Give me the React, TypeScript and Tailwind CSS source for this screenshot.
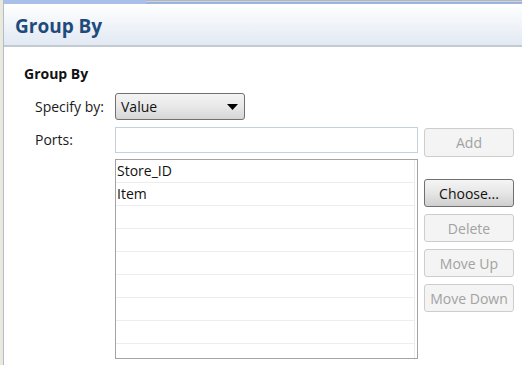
import React from 'react';

const font = { fontFamily: '"Open Sans", "Liberation Sans", sans-serif' };

function Btn({ label, disabled, className = '' }: { label: string; disabled?: boolean; className?: string }) {
  return (
    <button
      disabled={disabled}
      className={
        disabled
          ? `w-[90px] h-[29px] rounded-[3px] border border-[#cdcdcd] bg-[#f4f4f4] text-[14px] text-[#a2a2a2] ${className}`
          : `w-[90px] h-[29px] rounded-[3px] border border-[#707070] bg-gradient-to-b from-[#f5f5f5] via-[#e6e6e6] to-[#cfcfcf] text-[14px] text-[#111] ${className}`
      }
    >
      {label}
    </button>
  );
}

export default function App() {
  const rows = ['Store_ID', 'Item', '', '', '', '', '', '', ''];

  return (
    <div style={font} className="w-[522px] h-[365px] overflow-hidden bg-white flex">
      <div className="w-[3px] bg-[#ece9d8]" />
      <div className="flex-1 flex flex-col border-l border-[#a9bedb]">
        {/* tab edge */}
        <div className="h-[4px] flex">
          <div className="w-[142px] bg-[#a8c0ea]" />
          <div className="flex-1 flex flex-col">
            <div className="h-[1px] bg-[#b4b6bc]" />
            <div className="h-[1px] bg-[#c8d2e4]" />
            <div className="h-[2px] bg-[#9db4dc]" />
          </div>
        </div>

        {/* header */}
        <div className="h-[43px] flex items-center pl-[11px] bg-gradient-to-b from-white to-[#e2e9f3] border-b-2 border-[#c3cbd2]">
          <span className="text-[19px] font-bold text-[#1e4b7b] leading-none mt-[3px]">Group By</span>
        </div>

        {/* body */}
        <div className="pt-[15px] flex flex-col">
          <div className="pl-[20px] h-[24px] leading-[24px] text-[14px] font-bold text-[#111]">Group By</div>

          <div className="mt-[7px] pl-[31px] flex items-center h-[27px]">
            <span className="w-[80px] text-[14px] text-[#1a1a1a]">Specify by:</span>
            <div className="w-[130px] h-[27px] rounded-[3px] border border-[#707070] bg-gradient-to-b from-[#f4f4f4] via-[#e8e8e8] to-[#d6d6d6] flex items-center justify-between pl-[5px] pr-[6px]">
              <span className="text-[14px] text-[#111]">Value</span>
              <svg width="11" height="6" viewBox="0 0 11 6">
                <path d="M0 0 L11 0 L5.5 6 Z" fill="#000" />
              </svg>
            </div>
          </div>

          <div className="mt-[7px] pl-[31px] flex items-start">
            <span className="w-[80px] h-[26px] leading-[26px] text-[14px] text-[#1a1a1a]">Ports:</span>
            <div className="flex flex-col">
              <input className="w-[303px] h-[26px] border border-[#c4d1de] outline-none bg-white" />
              <div className="mt-[6px] w-[303px] h-[200px] border border-[#a3a3a3] overflow-hidden">
                <div className="mr-[2px] border-r border-[#ececec] h-full">
                  {rows.map((r, i) => (
                    <div key={i} className="h-[23px] border-b border-[#ededed] pl-[1px] leading-[22px] text-[14px] text-[#111]">
                      {r}
                    </div>
                  ))}
                </div>
              </div>
            </div>
            <div className="ml-[6px] flex flex-col mt-[1px]">
              <Btn label="Add" disabled />
              <Btn label="Choose..." className="mt-[22px] !h-[28px]" />
              <Btn label="Delete" disabled className="mt-[7px] !h-[28px]" />
              <Btn label="Move Up" disabled className="mt-[7px] !h-[28px]" />
              <Btn label="Move Down" disabled className="mt-[7px] !h-[28px]" />
            </div>
          </div>
        </div>
      </div>
    </div>
  );
}
